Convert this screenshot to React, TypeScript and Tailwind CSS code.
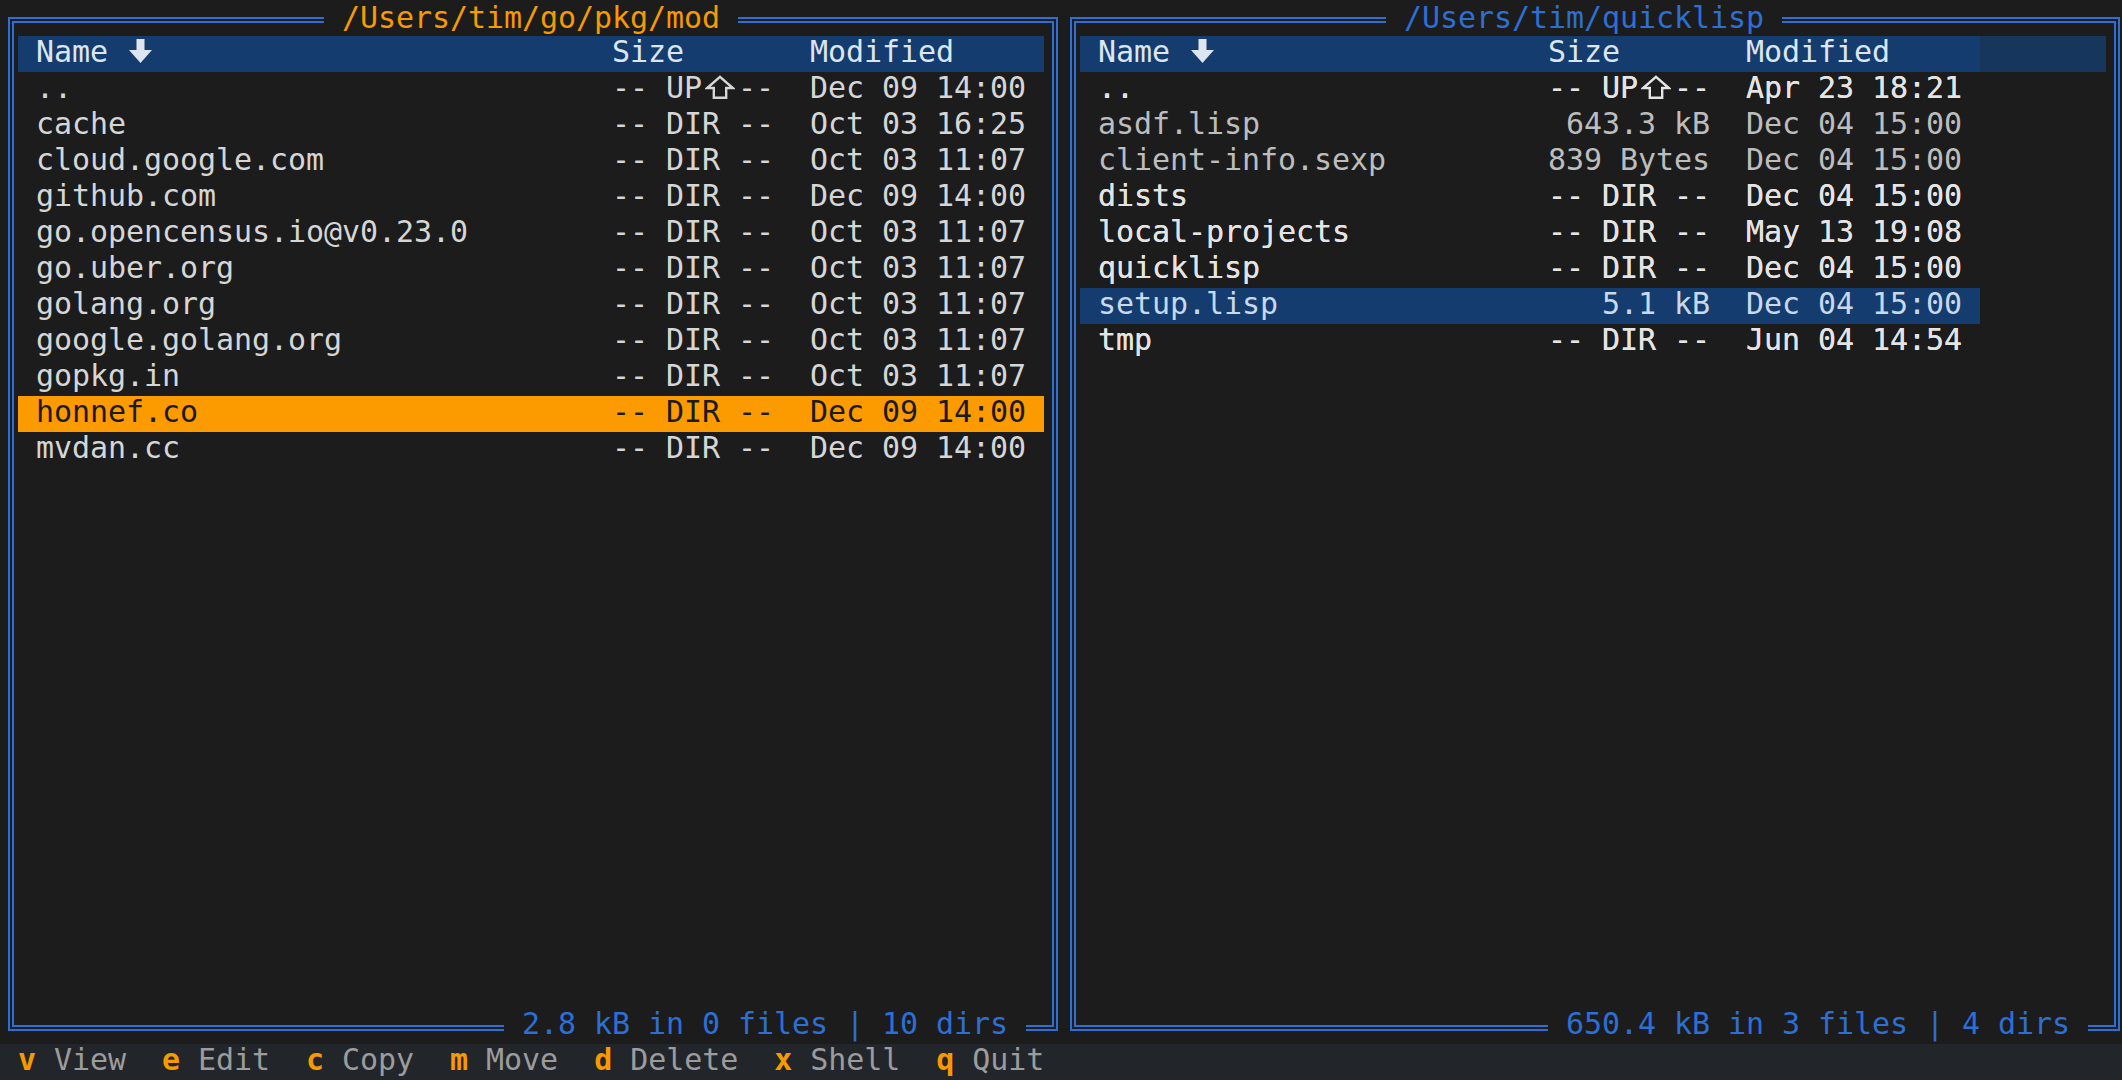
import React from "react";

type Row = { name: string; size?: string; date: string; dir?: boolean; up?: boolean };

const leftRows: Row[] = [
  { name: "..", date: "Dec 09 14:00", up: true, dir: true },
  { name: "cache", date: "Oct 03 16:25", dir: true },
  { name: "cloud.google.com", date: "Oct 03 11:07", dir: true },
  { name: "github.com", date: "Dec 09 14:00", dir: true },
  { name: "go.opencensus.io@v0.23.0", date: "Oct 03 11:07", dir: true },
  { name: "go.uber.org", date: "Oct 03 11:07", dir: true },
  { name: "golang.org", date: "Oct 03 11:07", dir: true },
  { name: "google.golang.org", date: "Oct 03 11:07", dir: true },
  { name: "gopkg.in", date: "Oct 03 11:07", dir: true },
  { name: "honnef.co", date: "Dec 09 14:00", dir: true },
  { name: "mvdan.cc", date: "Dec 09 14:00", dir: true },
];

const rightRows: Row[] = [
  { name: "..", date: "Apr 23 18:21", up: true, dir: true },
  { name: "asdf.lisp", size: "643.3 kB", date: "Dec 04 15:00" },
  { name: "client-info.sexp", size: "839 Bytes", date: "Dec 04 15:00" },
  { name: "dists", date: "Dec 04 15:00", dir: true },
  { name: "local-projects", date: "May 13 19:08", dir: true },
  { name: "quicklisp", date: "Dec 04 15:00", dir: true },
  { name: "setup.lisp", size: "5.1 kB", date: "Dec 04 15:00" },
  { name: "tmp", date: "Jun 04 14:54", dir: true },
];

function UpArrow() {
  return (
    <span className="inline-flex w-[36px] h-[31px] items-start pt-[3px] pl-[3px]">
      <svg width="30" height="24" viewBox="0 0 30 24" fill="none" stroke="currentColor" strokeWidth="2.4">
        <path d="M15 1.8 L27.8 13 H21.2 V22.8 H8.8 V13 H2.2 Z" />
      </svg>
    </span>
  );
}

function DownArrow() {
  return (
    <span className="inline-flex w-[18px] h-[31px] items-start pt-[3px] pl-[3px] overflow-visible">
      <svg width="23" height="24" viewBox="0 0 23 24" className="shrink-0" fill="currentColor">
        <rect x="7.5" y="0" width="8" height="12" />
        <polygon points="0,11 23,11 11.5,24" />
      </svg>
    </span>
  );
}

function SizeCell({ row }: { row: Row }) {
  if (row.up) {
    return (
      <div className="w-[162px] shrink-0 flex whitespace-pre">
        <span>-- UP</span>
        <UpArrow />
        <span>--</span>
      </div>
    );
  }
  return <div className="w-[162px] shrink-0 text-right whitespace-pre">{row.dir ? "-- DIR --" : row.size}</div>;
}

type PaneProps = {
  title: string;
  titleCls: string;
  footer: string;
  rows: Row[];
  nameW: string;
  rowW: string;
  extension: boolean;
  selected: number;
  selCls: string;
  fileCls: string;
  dirCls: string;
};

function Pane(p: PaneProps) {
  return (
    <div className="w-[1062px] h-[1044px] shrink-0 pt-[17px] pl-[8px] pr-[4px] pb-[13px] flex">
      <div className="relative flex-1 border-[6px] border-double border-[#2d6fd4] pt-[13px] pl-[4px] pr-[8px] flex flex-col">
        <div className={`absolute left-[310px] top-[-23px] h-[36px] px-[18px] bg-[#1c1c1c] whitespace-pre leading-[35px] ${p.titleCls}`}>
          {p.title}
        </div>
        <div className="flex h-[36px] shrink-0">
          <div className={`flex h-[36px] bg-[#143c6e] text-[#dde5ee] ${p.rowW}`}>
            <div className="w-[18px] shrink-0" />
            <div className={`${p.nameW} shrink-0 flex whitespace-pre`}>
              <span>Name </span>
              <DownArrow />
            </div>
            <div className="w-[162px] shrink-0 whitespace-pre">Size</div>
            <div className="w-[36px] shrink-0" />
            <div className="w-[216px] shrink-0 whitespace-pre">Modified</div>
            <div className="w-[18px] shrink-0" />
          </div>
          {p.extension && <div className="flex-1 h-[36px] bg-[#17365c]" />}
        </div>
        {p.rows.map((row, i) => {
          const sel = i === p.selected;
          const color = sel ? p.selCls : row.dir ? p.dirCls : p.fileCls;
          return (
            <div key={row.name} className={`flex h-[36px] shrink-0 ${p.rowW} ${color}`}>
              <div className="w-[18px] shrink-0" />
              <div className={`${p.nameW} shrink-0 whitespace-pre`}>{row.name}</div>
              <SizeCell row={row} />
              <div className="w-[36px] shrink-0" />
              <div className="w-[216px] shrink-0 whitespace-pre">{row.date}</div>
              <div className="w-[18px] shrink-0" />
            </div>
          );
        })}
        <div className="absolute right-[26px] bottom-[-19px] h-[36px] px-[18px] bg-[#1c1c1c] whitespace-pre text-[#2d6fd4]">
          {p.footer}
        </div>
      </div>
    </div>
  );
}

const keys: [string, string][] = [
  ["v", "View"],
  ["e", "Edit"],
  ["c", "Copy"],
  ["m", "Move"],
  ["d", "Delete"],
  ["x", "Shell"],
  ["q", "Quit"],
];

export default function App() {
  return (
    <div className="w-[2122px] h-[1080px] overflow-hidden bg-[#1c1c1c] flex flex-col font-['DejaVu_Sans_Mono',monospace] text-[30px] leading-[31px] tracking-[-0.06px] text-[#d4d4d4]">
      <div className="flex h-[1044px] w-[2124px] shrink-0">
        <Pane
          title="/Users/tim/go/pkg/mod"
          titleCls="text-[#f59a00]"
          footer="2.8 kB in 0 files | 10 dirs"
          rows={leftRows}
          nameW="w-[576px]"
          rowW="w-full"
          extension={false}
          selected={9}
          selCls="bg-[#fc9b00] text-[#1a1a1a]"
          fileCls="text-[#d4d4d4]"
          dirCls="text-[#d6d6d6]"
        />
        <Pane
          title="/Users/tim/quicklisp"
          titleCls="text-[#2d6fd4]"
          footer="650.4 kB in 3 files | 4 dirs"
          rows={rightRows}
          nameW="w-[450px]"
          rowW="w-[900px]"
          extension={true}
          selected={6}
          selCls="bg-[#143c6e] text-[#c9d8ea]"
          fileCls="text-[#bdbdbd]"
          dirCls="text-[#e4e4e4] [text-shadow:0_0_0.3px_#e4e4e4]"
        />
      </div>
      <div className="h-[36px] shrink-0 bg-[#22262b] flex whitespace-pre text-[#9c9c9c]">
        <span className="w-[18px]" />
        {keys.map(([k, label], i) => (
          <span key={k} className="whitespace-pre">
            <span className="font-bold text-[#f59a00]">{k}</span>
            {" " + label + (i < keys.length - 1 ? "  " : "")}
          </span>
        ))}
      </div>
    </div>
  );
}
